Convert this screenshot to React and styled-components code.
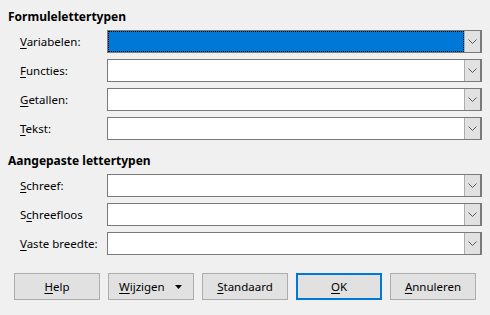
import React from 'react'
import styled, { createGlobalStyle } from 'styled-components'

const GlobalStyle = createGlobalStyle`
  html, body {
    margin: 0;
    padding: 0;
    background: #f0f0f0;
  }
  body {
    font-family: 'Noto Sans', 'Open Sans', sans-serif;
    font-size: 11.5px;
    color: #000;
  }
`

const Dialog = styled.div`
  width: 490px;
  height: 315px;
  box-sizing: border-box;
  padding: 9px 8px 0 8px;
  display: flex;
  flex-direction: column;
`

const Heading = styled.div`
  font-weight: bold;
  font-size: 12px;
  height: 16px;
  line-height: 16px;
  margin-top: ${props => props.$top || 0}px;
  margin-bottom: 5px;
`

const Rows = styled.div`
  display: flex;
  flex-direction: column;
  gap: 6px;
  padding-left: 12px;
`

const Row = styled.div`
  display: flex;
  align-items: center;
  height: 23px;
`

const Label = styled.label`
  width: 87px;
  flex: none;
  line-height: 16px;
`

const Key = styled.span`
  text-decoration: underline;
  text-underline-offset: 2px;
`

const Combo = styled.div`
  width: 375px;
  height: 23px;
  box-sizing: border-box;
  border: 1px solid #7a7a7a;
  background: #fff;
  display: flex;
`

const Field = styled.div`
  flex: 1;
  background: ${props => (props.$active ? '#0078d7' : '#fff')};
  outline: ${props => (props.$active ? '1px dotted #000' : 'none')};
  outline-offset: -1px;
`

const Arrow = styled.div`
  width: 17px;
  flex: none;
  box-sizing: border-box;
  border-left: 1px solid #adadad;
  border-right: 1px solid #7a7a7a;
  background: #e1e1e1;
  display: flex;
  align-items: center;
  justify-content: center;
`

const Buttons = styled.div`
  display: flex;
  gap: 8px;
  padding-left: 6px;
  margin-top: 18px;
`

const Button = styled.button`
  width: 86px;
  height: 27px;
  box-sizing: border-box;
  border: ${props => (props.$default ? '2px solid #0078d7' : '1px solid #adadad')};
  background: #e1e1e1;
  font-family: inherit;
  font-size: 11.5px;
  color: #000;
  display: flex;
  align-items: center;
  justify-content: ${props => (props.$menu ? 'space-between' : 'center')};
  padding: ${props => (props.$menu ? '0 11px 0 10px' : '0')};
`

const Chevron = () => (
  <svg width='9' height='5' viewBox='0 0 9 5'>
    <polyline points='0.5,0.5 4.5,4.5 8.5,0.5' fill='none' stroke='#5a5a5a' strokeWidth='1' />
  </svg>
)

const Caret = () => (
  <svg width='7' height='4' viewBox='0 0 7 4'>
    <polygon points='0,0 7,0 3.5,4' fill='#000' />
  </svg>
)

const ComboBox = ({ active }) => (
  <Combo>
    <Field $active={active} />
    <Arrow>
      <Chevron />
    </Arrow>
  </Combo>
)

const Item = ({ k, before = '', rest, active }) => (
  <Row>
    <Label>
      {before}
      <Key>{k}</Key>
      {rest}
    </Label>
    <ComboBox active={active} />
  </Row>
)

export default function App () {
  return (
    <>
      <GlobalStyle />
      <Dialog>
        <Heading>Formulelettertypen</Heading>
        <Rows>
          <Item k='V' rest='ariabelen:' active />
          <Item k='F' rest='uncties:' />
          <Item k='G' rest='etallen:' />
          <Item k='T' rest='ekst:' />
        </Rows>
        <Heading $top={13}>Aangepaste lettertypen</Heading>
        <Rows>
          <Item k='S' rest='chreef:' />
          <Item before='S' k='c' rest='hreefloos' />
          <Item k='V' rest='aste breedte:' />
        </Rows>
        <Buttons>
          <Button><span><Key>H</Key>elp</span></Button>
          <Button $menu><span><Key>W</Key>ijzigen</span><Caret /></Button>
          <Button><span><Key>S</Key>tandaard</span></Button>
          <Button $default><span><Key>O</Key>K</span></Button>
          <Button><span><Key>A</Key>nnuleren</span></Button>
        </Buttons>
      </Dialog>
    </>
  )
}
